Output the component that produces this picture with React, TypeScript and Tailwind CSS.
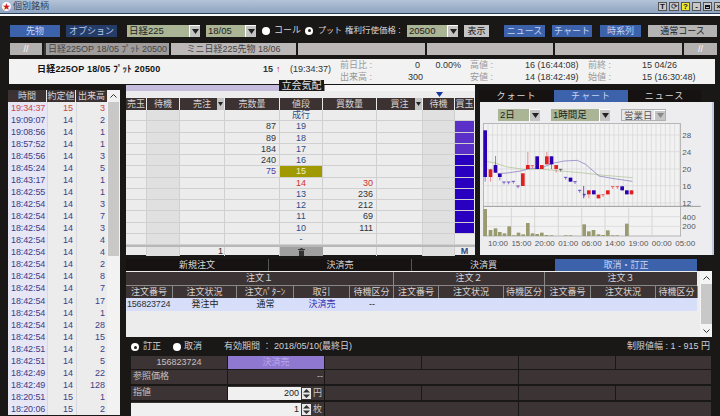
import React from "react";

const Tri = ({ c = "#222" }: { c?: string }) => (
  <svg width="7" height="5" viewBox="0 0 7 5"><path d="M0 0h7L3.5 5z" fill={c} /></svg>
);

const Sel = ({ w, label, light }: { w: string; label: string; light?: boolean }) => (
  <div className={`${w} h-[12px] flex items-stretch shrink-0 ${light ? "bg-[#e6e6e6] border border-[#b0b0b0] text-[#555]" : "bg-[#aab595] text-[#222]"}`}>
    <span className="flex-1 pl-[2px] text-[9.5px] leading-[12px] overflow-hidden whitespace-nowrap">{label}</span>
    <span className="w-[11px] bg-[#c4c4c4] border-l border-t border-white flex items-center justify-center"><Tri c={light ? "#888" : "#222"} /></span>
  </div>
);

const Radio = ({ on }: { on?: boolean }) => (
  <span className="w-[8px] h-[8px] rounded-full bg-white shrink-0 flex items-center justify-center">
    {on && <span className="w-[3px] h-[3px] rounded-full bg-[#222]" />}
  </span>
);

const Spin = () => (
  <svg width="9" height="11" viewBox="0 0 9 11" className="shrink-0 bg-[#e8e8e8]">
    <path d="M1 4.5L4.5 1 8 4.5zM1 6.5L4.5 10 8 6.5z" fill="#333" />
  </svg>
);

const ticks = [
  ["19:34:37", "15", "3"], ["19:09:07", "14", "2"], ["19:08:56", "14", "1"], ["18:57:52", "14", "1"],
  ["18:45:56", "14", "3"], ["18:45:24", "14", "5"], ["18:43:17", "14", "1"], ["18:42:55", "14", "1"],
  ["18:42:54", "14", "3"], ["18:42:54", "14", "7"], ["18:42:54", "14", "3"], ["18:42:54", "14", "4"],
  ["18:42:54", "14", "4"], ["18:42:54", "14", "2"], ["18:42:54", "14", "8"], ["18:42:54", "14", "7"],
  ["18:42:54", "14", "17"], ["18:42:54", "14", "1"], ["18:42:54", "14", "28"], ["18:42:54", "14", "15"],
  ["18:42:51", "14", "2"], ["18:42:51", "14", "5"], ["18:42:49", "14", "22"], ["18:42:49", "14", "128"],
  ["18:20:51", "15", "1"], ["18:20:06", "15", "2"],
];

const board: [string, string, string, number][] = [
  ["", "成行", "", 0], ["87", "19", "", 1], ["89", "18", "", 1], ["184", "17", "", 1], ["240", "16", "", 2],
  ["75", "15", "", 2], ["", "14", "30", 2], ["", "13", "236", 2], ["", "12", "212", 2], ["", "11", "69", 2],
  ["", "10", "111", 2], ["", "-", "", 0],
];

const Head = ({ w, t, dd }: { w: string; t: string; dd?: boolean }) => (
  <div className={`${w} shrink-0 bg-[#3c3232] text-[#d8d2d2] text-[9px] leading-[12px] text-center border-r border-[#e8e8e8] relative whitespace-nowrap`}>
    {t}
    {dd && <span className="absolute right-0 top-0 w-[7px] h-[12px] bg-[#c4c4c4] flex items-center justify-center"><svg width="5" height="4" viewBox="0 0 5 4"><path d="M0 0h5L2.5 4z" fill="#222" /></svg></span>}
  </div>
);

const candles: [number, number, number, number, number, string][] = [
  [28, 148, 288, 148, 302, "#2a00b0"], [44, 265, 288, 265, 302, "#e02020"], [59, 252, 275, 225, 275, "#2a00b0"],
  [72, 278, 288, 278, 298, "#2a00b0"], [141, 277, 315, 277, 315, "#e02020"], [156, 252, 264, 213, 264, "#e02020"],
  [184, 226, 264, 226, 264, "#2a00b0"], [198, 252, 264, 252, 264, "#e02020"], [213, 226, 250, 213, 250, "#e02020"],
  [227, 226, 250, 226, 264, "#2a00b0"], [241, 252, 264, 252, 275, "#e02020"], [284, 290, 302, 290, 302, "#2a00b0"],
  [339, 328, 340, 328, 352, "#e02020"], [354, 328, 340, 328, 340, "#2a00b0"], [368, 341, 352, 341, 352, "#e02020"],
  [396, 328, 340, 328, 340, "#e02020"], [439, 316, 328, 316, 328, "#2a00b0"], [453, 328, 340, 328, 340, "#2a00b0"],
  [467, 328, 340, 328, 340, "#e02020"],
];
const dojis: [number, number, string][] = [
  [90, 303, "#2a00b0"], [104, 303, "#2a00b0"], [118, 301, "#2a00b0"], [132, 315, "#2a00b0"], [175, 254, "#e02020"],
  [260, 265, "#222"], [275, 289, "#2a00b0"], [303, 302, "#2a00b0"], [317, 328, "#2a00b0"], [331, 340, "#2a00b0"],
  [387, 341, "#e02020"], [416, 317, "#e02020"], [430, 317, "#e02020"],
];
const vols: [number, number][] = [
  [28, 384], [44, 447], [59, 442], [72, 453], [86, 457], [100, 436], [114, 463], [128, 455], [142, 460], [156, 426],
  [170, 457], [184, 459], [198, 455], [212, 462], [227, 463], [270, 463], [284, 463], [325, 430], [339, 451], [353, 447],
  [368, 460], [382, 462], [396, 448], [410, 463], [424, 463], [453, 428],
];

const Chart = () => (
  <svg viewBox="18 120 696 390" width="232" height="130" className="block">
    <rect x="28" y="128" width="592" height="337" fill="#f2f2f2" stroke="#999" strokeWidth="2" />
    {Array.from({ length: 42 }, (_, i) => (
      <line key={i} x1={42 + i * 14} x2={42 + i * 14} y1="128" y2="375" stroke="#d4d4d4" strokeWidth="2" />
    ))}
    {[112, 182, 253, 323, 393, 464, 534].map((x) => (
      <line key={x} x1={x} x2={x} y1="380" y2="465" stroke="#c8c8c8" strokeWidth="2" />
    ))}
    {[162, 212, 264, 314, 366, 407, 436].map((y) => (
      <line key={y} x1="28" x2="620" y1={y} y2={y} stroke="#d4d4d4" strokeWidth="2" />
    ))}
    <line x1="28" x2="680" y1="376" y2="376" stroke="#999" strokeWidth="3" />
    {vols.map(([x, y]) => <rect key={x} x={x} y={y} width="11" height={465 - y} fill="#9a9a70" />)}
    <polyline fill="none" stroke="#a8c090" strokeWidth="2" points="28,240 60,245 100,258 150,265 200,264 260,270 330,276 380,282 475,290" />
    <polyline fill="none" stroke="#7a70b8" strokeWidth="2" points="70,278 100,276 140,270 170,262 200,262 235,247 270,240 310,238 335,250 375,285 420,293 475,301" />
    {candles.map(([x, t, b, wt, wb, c]) => (
      <g key={x}>
        <line x1={x + 5.5} x2={x + 5.5} y1={wt} y2={wb} stroke={c} strokeWidth="2" opacity="0.7" />
        <rect x={x} y={t} width="11" height={b - t} fill={c} />
      </g>
    ))}
    {dojis.map(([x, y, c]) => (
      <g key={x}>
        <line x1={x - 5} x2={x + 5} y1={y} y2={y} stroke={c} strokeWidth="2" />
        <line x1={x} x2={x} y1={y} y2={y + 7} stroke={c} strokeWidth="1.5" />
      </g>
    ))}
    <line x1="329" x2="329" y1="315" y2="352" stroke="#2a00b0" strokeWidth="2" />
    <g fill="#555" fontSize="24" fontFamily="'Liberation Sans',sans-serif">
      {[["28", 171], ["24", 221], ["20", 273], ["16", 323], ["12", 374], ["400", 416], ["200", 445]].map(([t, y]) => (
        <text key={String(t)} x="625" y={y as number}>{t}</text>
      ))}
      {["10:00", "15:00", "20:00", "01:00", "06:00", "14:00", "19:00", "00:00", "05:00"].map((t, i) => (
        <text key={i} x={42 + i * 70.2} y="494">{t}</text>
      ))}
    </g>
  </svg>
);

const orderHead: [string, string][] = [
  ["w-[47px]", "注文番号"], ["w-[64px]", "注文状況"], ["w-[57px]", "注文ﾊﾟﾀｰﾝ"], ["w-[56px]", "取引"], ["w-[44px]", "待機区分"],
  ["w-[45px]", "注文番号"], ["w-[65px]", "注文状況"], ["w-[41px]", "待機区分"],
  ["w-[46px]", "注文番号"], ["w-[65px]", "注文状況"], ["w-[42px]", "待機区分"],
];

const Cell = ({ w, children, cls = "" }: { w: string; children?: React.ReactNode; cls?: string }) => (
  <div className={`${w} shrink-0 bg-[#3c3434] text-[#c8c0c0] text-[9px] leading-[13px] ${cls}`}>{children}</div>
);

export default function App() {
  return (
    <div className="w-[720px] h-[416px] overflow-hidden bg-[#1a1717] flex flex-col font-['Liberation_Sans','Noto_Sans_CJK_JP',sans-serif] text-[9px]">
      {/* title bar */}
      <div className="h-[14px] shrink-0 bg-gradient-to-b from-[#b4c4d8] to-[#8ea4c0] border-b border-[#2b3f5c] flex items-center pl-[2px]">
        <span className="w-[9px] h-[9px] rounded-full bg-white flex items-center justify-center text-[#d01818] text-[8px] leading-none">★</span>
        <span className="ml-[2px] text-[9px] text-[#33445a] leading-[13px]">個別銘柄</span>
        <div className="ml-auto flex gap-[2px] mr-[-3px]">
          <span className="w-[9px] h-[9px] bg-[#c8c8c8] border border-[#555] text-[8px] leading-[8px] text-center font-bold text-[#112]">T</span>
          <span className="w-[10px] h-[9px] bg-[#c8c8c8] border border-[#555] text-[8px] leading-[7px] text-center text-[#112]">⟳</span>
          <span className="w-[9px] h-[9px] bg-[#f0e830] border border-[#555] text-[8px] leading-[8px] text-center font-bold text-[#112]">?</span>
          <span className="w-[9px] h-[9px] bg-[#c8c8c8] border border-[#555] text-[8px] leading-[7px] text-center font-bold text-[#112]">-</span>
          <span className="w-[9px] h-[9px] bg-[#c8c8c8] border border-[#555] flex items-center justify-center"><span className="w-[5px] h-[4px] border border-t-2 border-[#112]" /></span>
          <span className="w-[9px] h-[9px] bg-[#c8c8c8] border border-[#555] text-[8px] leading-[7px] text-center font-bold text-[#112]">×</span>
        </div>
      </div>
      <div className="h-[2px] shrink-0 bg-white" />

      {/* toolbar */}
      <div className="h-[13px] mt-[8px] shrink-0 flex items-center text-[9px] text-[#d8d8d8] whitespace-nowrap">
        <div className="ml-[10px] w-[50px] h-[12px] bg-[#3c62ac] text-[#c8d4f0] text-center leading-[12px]">先物</div>
        <div className="ml-[6px] w-[51px] h-[12px] bg-[#263c68] text-[#b8c8e8] text-center leading-[12px]">オプション</div>
        <div className="ml-[10px]"><Sel w="w-[73px]" label="日経225" /></div>
        <div className="ml-[6px]"><Sel w="w-[50px]" label="18/05" /></div>
        <div className="ml-[6px]"><Radio /></div>
        <span className="ml-[4px] w-[31px]">コール</span>
        <Radio on />
        <span className="ml-[5px] w-[27px] text-[8px]">プット</span>
        <span className="w-[62px] text-[8.5px]">権利行使価格 :</span>
        <Sel w="w-[51px]" label="20500" />
        <div className="ml-[6px] w-[25px] h-[12px] bg-[#c4c4c4] text-[#222] text-center leading-[12px]">表示</div>
        <div className="ml-[15px] w-[41px] h-[12px] bg-[#3c62ac] text-[#c8d4f0] text-center leading-[12px]">ニュース</div>
        <div className="ml-[7px] w-[40px] h-[12px] bg-[#3c62ac] text-[#c8d4f0] text-center leading-[12px]">チャート</div>
        <div className="ml-[8px] w-[41px] h-[12px] bg-[#3c62ac] text-[#c8d4f0] text-center leading-[12px]">時系列</div>
        <div className="ml-[7px] w-[69px] h-[12px] bg-[#b4b4b4] text-[#222] text-center leading-[12px]">通常コース</div>
      </div>

      {/* tab strip */}
      <div className="h-[12px] mt-[6px] shrink-0 flex gap-[2px] ml-[10px] text-[9px] leading-[12px] text-[#444] whitespace-nowrap">
        <div className="w-[32px] bg-[#b4b0b0] text-white text-center">//</div>
        <div className="w-[125px] bg-[#a09c9c] border-l-2 border-[#333] text-center">日経225OP 18/05 ﾌﾟｯﾄ 20500</div>
        <div className="w-[125px] bg-[#bcb8b8] text-center">ミニ日経225先物 18/06</div>
        <div className="w-[127px] bg-[#bcb8b8]" />
        <div className="w-[126px] bg-[#bcb8b8]" />
        <div className="w-[127px] bg-[#bcb8b8]" />
        <div className="w-[33px] bg-[#b4b0b0] text-white text-center">//</div>
      </div>

      {/* info bar */}
      <div className="h-[25px] mt-[4px] ml-[9px] w-[706px] shrink-0 bg-[#f2f2f2] flex text-[#333] whitespace-nowrap text-[9px] leading-[12px]">
        <div className="w-[254px] pl-[28px] pt-[4px] font-bold text-[#111] tracking-[0.2px]">日経225OP 18/05 ﾌﾟｯﾄ 20500</div>
        <div className="w-[13px] pt-[4px] font-bold">15</div>
        <div className="w-[14px] pt-[4px] text-[#c02020]">↑</div>
        <div className="w-[50px] pt-[4px]">(19:34:37)</div>
        <div className="w-[130px] flex flex-col">
          <div className="flex"><span className="w-[75px] text-[#999]">前日比 :</span><span className="w-[6px]">0</span><span className="w-[40px] text-right">0.00%</span></div>
          <div className="flex"><span className="w-[68px] text-[#999]">出来高 :</span><span>300</span></div>
        </div>
        <div className="w-[118px] flex flex-col">
          <div className="flex"><span className="w-[55px] text-[#999]">高値 :</span><span>16 (16:44:08)</span></div>
          <div className="flex"><span className="w-[55px] text-[#999]">安値 :</span><span>14 (18:42:49)</span></div>
        </div>
        <div className="flex flex-col">
          <div className="flex"><span className="w-[54px] text-[#999]">前終 :</span><span>15 04/26</span></div>
          <div className="flex"><span className="w-[54px] text-[#999]">始値 :</span><span>15 (16:30:48)</span></div>
        </div>
      </div>

      {/* main */}
      <div className="flex-1 min-h-0 flex">
        {/* ticks */}
        <div className="ml-[8px] mt-[6px] w-[112px] shrink-0 flex flex-col">
          <div className="flex h-[12px] shrink-0 text-[9px] leading-[12px] text-[#d8d2d2] bg-[#f0f0f0] whitespace-nowrap">
            <div className="w-[39px] bg-[#3c3232] text-center border-r border-[#e8e8e8]">時間</div>
            <div className="w-[29px] bg-[#3c3232] text-center border-r border-[#e8e8e8]">約定値</div>
            <div className="w-[31px] bg-[#3c3232] text-center">出来高</div>
            <div className="w-[13px] flex items-center justify-center text-[#333]"><svg width="7" height="4" viewBox="0 0 7 4"><path d="M.5 3.5L3.5.5l3 3" fill="none" stroke="#333" /></svg></div>
          </div>
          <div className="flex">
            <div className="w-[99px] shrink-0">
              {ticks.map((r, i) => (
                <div key={i} className={`flex h-[12.04px] leading-[12px] text-[9px] ${i === 0 ? "text-[#c84848]" : "text-[#403c84]"}`}>
                  <div className="w-[39px] bg-[#e6e6f4] pl-[3px] tracking-[-0.1px]">{r[0]}</div>
                  <div className="w-[29px] bg-[#ececec] border-l border-[#d8d8e0] text-right pr-[3px]">{r[1]}</div>
                  <div className="w-[31px] bg-[#ececec] border-l border-[#d8d8e0] text-right pr-[2px]">{r[2]}</div>
                </div>
              ))}
            </div>
            <div className="w-[13px] h-[313px] bg-[#f2f2f2] flex flex-col"><div className="ml-[1px] w-[11px] h-[154px] bg-[#c8c8c8]" /></div>
          </div>
        </div>

        <div className="ml-[6px] w-[594px] shrink-0 flex flex-col">
          <div className="h-[175px] shrink-0 flex">
            {/* board */}
            <div className="mt-[1px] w-[349px] h-[170px] shrink-0 bg-[#ececec] flex flex-col">
              <div className="h-[6px] shrink-0 flex">
                <div className="w-[153px] bg-[#c4bbdd]" />
                <div className="w-[45px] h-[11px] -mt-[5px] bg-[#1c1818] text-[#e0e0e0] text-[10px] leading-[11px] text-center relative whitespace-nowrap">立会気配</div>
                <div className="flex-1 bg-[#f6f6f6] border-l border-[#888]" />
              </div>
              <div className="h-[7px] shrink-0 flex justify-end pr-[32px] bg-[#ececec]"><svg width="7" height="5" viewBox="0 0 7 5" className="mt-[1px]"><path d="M0 0h7L3.5 5z" fill="#1838a0" /></svg></div>
              <div className="flex h-[12px] shrink-0">
                <Head w="w-[21px]" t="売玉" />
                <Head w="w-[33px]" t="待機" />
                <Head w="w-[45px]" t="売注" dd />
                <Head w="w-[55px]" t="売数量" />
                <Head w="w-[43px]" t="値段" />
                <Head w="w-[54px]" t="買数量" />
                <Head w="w-[46px]" t="買注" dd />
                <Head w="w-[32px]" t="待機" />
                <Head w="w-[20px]" t="買玉" />
              </div>
              {board.map(([s, p, b, lvl], i) => (
                <div key={i} className="flex h-[11.25px] shrink-0 border-b border-[#d0d0d0] text-[9px] leading-[11px]">
                  <div className="w-[21px] border-r border-[#d0d0d0]" />
                  <div className="w-[33px] bg-[#e0e0e0] border-r border-[#d0d0d0]" />
                  <div className="w-[45px] border-r border-[#d0d0d0]" />
                  <div className={`w-[55px] border-r border-[#d0d0d0] text-right pr-[3px] ${p === "15" ? "text-[#5040a0]" : "text-[#333]"}`}>{s}</div>
                  <div className={`w-[43px] border-r border-[#d0d0d0] text-center ${p === "15" ? "bg-[#a09a00] text-[#f0f0c0]" : p === "14" ? "text-[#d03030]" : "text-[#2c4c88]"}`}>{p}</div>
                  <div className={`w-[54px] border-r border-[#d0d0d0] text-right pr-[3px] ${p === "14" ? "text-[#d03030]" : "text-[#333]"}`}>{b}</div>
                  <div className="w-[46px] border-r border-[#d0d0d0]" />
                  <div className="w-[32px] bg-[#e0e0e0] border-r border-[#d0d0d0]" />
                  <div className={`w-[19px] ${lvl === 1 ? "bg-[#5a30c8]" : lvl === 2 ? "bg-[#2a00c0]" : ""}`} />
                </div>
              ))}
              <div className="flex flex-1 border-t-2 border-[#b8b8b8] text-[9px] leading-[9px] text-[#2c4c88]">
                <div className="w-[21px] border-r border-[#d0d0d0]" />
                <div className="w-[33px] bg-[#e0e0e0] border-r border-[#d0d0d0]" />
                <div className="w-[45px] border-r border-[#d0d0d0] text-right pr-[1px] text-[#333]">1</div>
                <div className="w-[55px] border-r border-[#d0d0d0]" />
                <div className="w-[43px] bg-[#a0a0a0] flex items-center justify-center"><svg width="7" height="8" viewBox="0 0 7 8"><path d="M0 1h7v1H0zM1 2.5h5V8H1zM2.5 0h2v1h-2z" fill="#333" /></svg></div>
                <div className="w-[54px] border-r border-[#d0d0d0]" />
                <div className="w-[46px] border-r border-[#d0d0d0]" />
                <div className="w-[32px] bg-[#e0e0e0] border-r border-[#d0d0d0]" />
                <div className="w-[19px] text-center font-bold">M</div>
              </div>
            </div>

            {/* chart panel */}
            <div className="ml-[3px] w-[237px] shrink-0 flex flex-col pt-[6px]">
              <div className="h-[12px] flex text-[9px] leading-[12px] text-[#d8d8d8] text-center tracking-[1px] shrink-0">
                <div className="w-[75px] ml-[1px] bg-[#161212]">クォート</div>
                <div className="w-[74px] bg-[#3c62ac] text-[#c8d4f0]">チャート</div>
                <div className="w-[73px] bg-[#161212]">ニュース</div>
              </div>
              <div className="ml-[2px] w-[234px] h-[153px] bg-[#ededf0] border-r-2 border-[#c0cce0] flex flex-col">
                <div className="h-[12px] mt-[7px] shrink-0 flex">
                  <div className="ml-[18px]"><Sel w="w-[42px]" label="2日" /></div>
                  <div className="ml-[11px]"><Sel w="w-[59px]" label="1時間足" /></div>
                  <div className="ml-[11px]"><Sel w="w-[45px]" label="営業日" light /></div>
                </div>
                <Chart />
              </div>
            </div>
          </div>

          {/* order tabs */}
          <div className="h-[12px] shrink-0 flex text-[9px] leading-[12px] text-[#d8d8d8] text-center">
            <div className="w-[143px] bg-[#161212] border-r border-[#555]">新規注文</div>
            <div className="w-[143px] bg-[#161212] border-r border-[#555]">決済売</div>
            <div className="w-[143px] bg-[#161212]">決済買</div>
            <div className="w-[142px] bg-[#3c62ac] text-[#c8d4f0]">取消・訂正</div>
          </div>

          {/* order table */}
          <div className="h-[66px] w-[586px] shrink-0 bg-[#ececec] flex">
            <div className="w-[571px] shrink-0 whitespace-nowrap">
              <div className="flex h-[13px] mt-[1px] text-[9px] leading-[13px] text-center text-[#d8d2d2] bg-[#3c3434]">
                <div className="w-[268px] border-r border-[#888]">注文１</div>
                <div className="w-[151px] border-r border-[#888]">注文２</div>
                <div className="w-[152px]">注文３</div>
              </div>
              <div className="flex h-[13px] bg-[#3c3434] border-t border-[#888]">
                {orderHead.map(([w, t], i) => (
                  <div key={i} className={`${w} shrink-0 text-[9px] leading-[12px] text-center text-[#d8d2d2] border-r border-[#888]`}>{t}</div>
                ))}
              </div>
              <div className="flex h-[13px] bg-[#d6defa] text-[9px] leading-[13px] text-[#222] text-center">
                <div className="w-[47px] text-[9px] tracking-[-0.2px] text-left pl-[1px] text-[#333]">156823724</div>
                <div className="w-[64px]">発注中</div>
                <div className="w-[57px]">通常</div>
                <div className="w-[56px] text-[#3828a8]">決済売</div>
                <div className="w-[44px]">--</div>
              </div>
            </div>
            <div className="w-[13px] ml-[3px] flex flex-col items-center bg-[#f4f4f4]">
              <div className="h-[13px] flex items-center"><svg width="7" height="4" viewBox="0 0 7 4"><path d="M.5 3.5L3.5.5l3 3" fill="none" stroke="#333" /></svg></div>
              <div className="w-[11px] h-[40px] bg-[#c8c8c8]" />
              <div className="h-[13px] flex items-center"><svg width="7" height="4" viewBox="0 0 7 4"><path d="M.5.5l3 3 3-3" fill="none" stroke="#333" /></svg></div>
            </div>
          </div>

          {/* form */}
          <div className="flex-1 min-h-0 flex flex-col whitespace-nowrap">
            <div className="h-[19px] shrink-0 flex items-center pl-[5px] pt-[1px] text-[9px] text-[#d0d0d0] w-[584px]">
              <Radio on />
              <span className="ml-[4px] w-[30px]">訂正</span>
              <Radio />
              <span className="ml-[3px] w-[40px]">取消</span>
              <span>有効期間 ： 2018/05/10(最終日)</span>
              <span className="ml-auto">制限値幅 : 1 - 915 円</span>
            </div>
            <div className="ml-[5px] w-[580px] flex flex-col gap-[1px]">
              <div className="flex gap-[1px] h-[13px]">
                <Cell w="w-[96px]" cls="text-center">156823724</Cell>
                <Cell w="w-[96px]" cls="!bg-[#8f78d0] text-center !text-[#b8a8e8]">決済売</Cell>
                <Cell w="w-[96px]" /><Cell w="w-[96px]" /><Cell w="w-[96px]" /><Cell w="w-[95px]" />
              </div>
              <div className="flex gap-[1px] h-[14px]">
                <Cell w="w-[96px]" cls="pl-[2px]">参照価格</Cell>
                <Cell w="w-[96px]" cls="text-right pr-[1px]">--</Cell>
                <Cell w="w-[193px]" /><Cell w="w-[192px]" />
              </div>
              <div className="flex gap-[1px] h-[14px] mt-[1px]">
                <Cell w="w-[96px]" cls="pl-[2px]">指値</Cell>
                <Cell w="w-[96px]" cls="flex items-center">
                  <span className="w-[73px] h-[13px] bg-[#f0f0f0] text-[#222] text-right pr-[2px]">200</span>
                  <span className="ml-[1px]"><Spin /></span>
                  <span className="ml-[2px]">円</span>
                </Cell>
                <Cell w="w-[96px]" /><Cell w="w-[96px]" /><Cell w="w-[96px]" /><Cell w="w-[95px]" />
              </div>
              <div className="flex gap-[1px] h-[14px] mt-[1px]">
                <Cell w="w-[193px]" cls="flex items-center">
                  <span className="w-[170px] h-[13px] bg-[#f0f0f0] text-[#222] text-right pr-[2px]">1</span>
                  <span className="ml-[1px]"><Spin /></span>
                  <span className="ml-[2px]">枚</span>
                </Cell>
                <Cell w="w-[193px]" /><Cell w="w-[192px]" />
              </div>
            </div>
          </div>
        </div>
      </div>
    </div>
  );
}
